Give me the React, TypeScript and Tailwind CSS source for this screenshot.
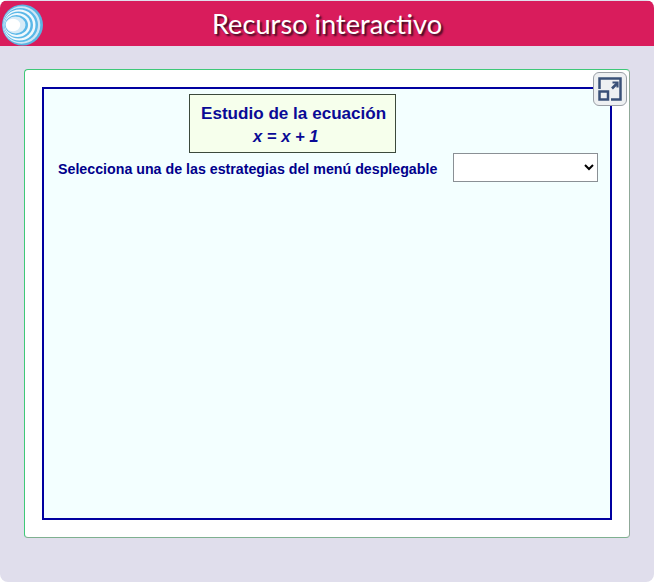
const Logo = () => (
    <svg width="44" height="44" viewBox="0 0 44 44" className="absolute left-[1px] top-[2px]">
        <circle cx="21.5" cy="22" r="20.5" fill="#5ab4e2" />
        <circle cx="20.5" cy="22" r="18.8" fill="#cfe6f6" />
        <ellipse cx="19.5" cy="22" rx="17.5" ry="17" fill="#5ab8e8" />
        <ellipse cx="18.5" cy="22" rx="16" ry="15.5" fill="#f0f9fd" />
        <ellipse cx="17.5" cy="22" rx="14.5" ry="13.5" fill="#5ab8e8" />
        <ellipse cx="16.5" cy="22" rx="13" ry="12" fill="#f0f9fd" />
        <ellipse cx="15.5" cy="22" rx="11.5" ry="10" fill="#5ab8e8" />
        <ellipse cx="14.5" cy="22" rx="10" ry="8.5" fill="#d6ecf8" />
        <ellipse cx="12" cy="22" rx="7.2" ry="6.2" fill="#ffffff" />
    </svg>
);

const ExpandIcon = () => (
    <svg width="24" height="24" viewBox="0 0 24 24" fill="none" stroke="#3a5078" strokeWidth="2.5">
        <path d="M1.5 12V1.5h21v21H13" />
        <rect x="1.5" y="14.5" width="8.5" height="8" />
        <path d="M14 11.5l5-5" strokeWidth="2.6" />
        <path d="M14.5 5.5h5v5" strokeWidth="2.2" />
    </svg>
);

export default function App() {
    return (
        <div className="h-[582px] w-[654px] overflow-hidden bg-white font-['Liberation_Sans',sans-serif]">
            <div className="flex h-full flex-col overflow-hidden rounded-lg bg-[#e0deec]">
                <header className="relative mt-px flex h-[45px] items-center justify-center bg-[#d91c5c]">
                    <Logo />
                    <h1 className="font-['Lato',sans-serif] text-[27.2px] leading-none text-white [text-shadow:2px_2px_2px_#3a0a20]">
                        Recurso interactivo
                    </h1>
                </header>

                <main className="px-6 pt-[23px]">
                    <div className="relative h-[469px] w-[606px] rounded-sm border border-[#3fc878] border-r-[#8fa898] border-b-[#7fb090] bg-white p-[17px]">
                        <button className="absolute right-[2px] top-[2px] flex h-[34px] w-[34px] items-center justify-center rounded-md border border-[#9a9fa6] bg-[#eef0f2]">
                            <ExpandIcon />
                        </button>

                        <div className="h-[433px] w-[570px] border-2 border-[#0000a0] bg-[#f3ffff]">
                            <div className="ml-[145px] mt-[5px] h-[59px] w-[207px] border border-[#3c4a3c] bg-[#f6ffec] text-[17px] font-bold italic text-[#0a0a96]">
                                <div className="pl-[11px] pt-[9px] text-[17.1px] leading-[20px] not-italic">Estudio de la ecuación</div>
                                <div className="pl-[63px] pt-[3px] text-[16.6px] leading-[20px]">x = x + 1</div>
                            </div>
                            <div className="flex items-center">
                                <span className="ml-[14px] w-[395px] pt-[5px] text-[14.22px] font-bold text-[#00008c]">
                                    Selecciona una de las estrategias del menú desplegable
                                </span>
                                <select className="h-[29px] w-[145px] border border-[#8a9095] bg-white text-sm" />
                            </div>
                        </div>
                    </div>
                </main>
            </div>
        </div>
    );
}
